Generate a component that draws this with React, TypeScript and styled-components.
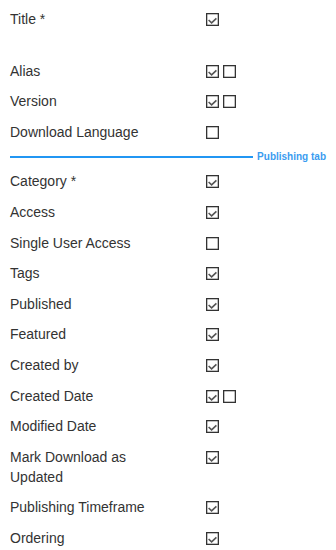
import React from "react"
import styled, { createGlobalStyle } from "styled-components"

type BoxState = boolean[]

interface Field {
  label: string
  boxes: BoxState
}

const topFields: Field[] = [
  { label: "Alias", boxes: [true, false] },
  { label: "Version", boxes: [true, false] },
  { label: "Download Language", boxes: [false] },
]

const publishingFields: Field[] = [
  { label: "Category *", boxes: [true] },
  { label: "Access", boxes: [true] },
  { label: "Single User Access", boxes: [false] },
  { label: "Tags", boxes: [true] },
  { label: "Published", boxes: [true] },
  { label: "Featured", boxes: [true] },
  { label: "Created by", boxes: [true] },
  { label: "Created Date", boxes: [true, false] },
  { label: "Modified Date", boxes: [true] },
  { label: "Mark Download as Updated", boxes: [true] },
  { label: "Publishing Timeframe", boxes: [true] },
  { label: "Ordering", boxes: [true] },
]

const GlobalStyle = createGlobalStyle`
  body {
    margin: 0;
    background: #fff;
    font-family: "Liberation Sans", Arial, sans-serif;
  }
`

const CheckBox: React.FC<{ checked: boolean }> = ({ checked }) => (
  <Box width="13" height="13" viewBox="0 0 13 13">
    <rect x="0.65" y="0.65" width="11.7" height="11.7" fill="#fff" stroke="#333" strokeWidth="1.3" />
    {checked && (
      <polyline
        points="2.6,7 5.6,9.8 10.4,5.4"
        fill="none"
        stroke="#555"
        strokeWidth="1.6"
      />
    )}
  </Box>
)

const FieldRow: React.FC<Field> = ({ label, boxes }) => (
  <Row>
    <Label>{label}</Label>
    <Boxes>
      {boxes.map((b, i) => (
        <CheckBox key={i} checked={b} />
      ))}
    </Boxes>
  </Row>
)

export default function App() {
  return (
    <>
      <GlobalStyle />
      <Page>
        <FieldRow label="Title *" boxes={[true]} />
        <Spacer />
        {topFields.map((f) => (
          <FieldRow key={f.label} {...f} />
        ))}
        <Divider>
          <Line />
          <TabName>Publishing tab</TabName>
        </Divider>
        {publishingFields.map((f) => (
          <FieldRow key={f.label} {...f} />
        ))}
      </Page>
    </>
  )
}

const Page = styled.div`
  padding: 9px 10px 0 10px;
`

const Row = styled.div`
  display: grid;
  grid-template-columns: 196px auto;
  align-items: start;
  margin-bottom: 10.6px;
`

const Label = styled.div`
  font-size: 14px;
  line-height: 20px;
  color: #333;
  padding-right: 40px;
`

const Boxes = styled.div`
  display: flex;
  gap: 4px;
  padding-top: 4px;
`

const Box = styled.svg`
  display: block;
`

const Spacer = styled.div`
  height: 21px;
`

const Divider = styled.div`
  display: flex;
  align-items: center;
  gap: 4px;
  margin: -1px 0 8px;
  height: 12px;
`

const Line = styled.div`
  flex: 1;
  height: 2px;
  background: #2196f3;
`

const TabName = styled.span`
  font-size: 10px;
  font-weight: bold;
  color: #3a9cf0;
  line-height: 12px;
`
